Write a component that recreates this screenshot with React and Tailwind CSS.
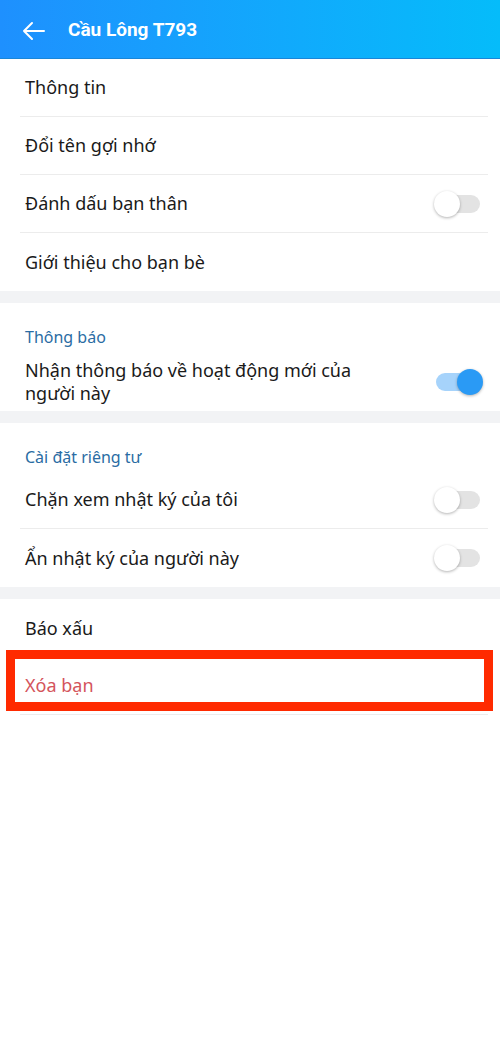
import React from 'react';

const Toggle = ({ on }) => (
  <div className="relative w-[48px] h-[28px] flex items-center shrink-0">
    <div className={`w-[44px] h-[18px] ml-[2px] rounded-full ${on ? 'bg-[#a6d3fb]' : 'bg-[#e3e3e3]'}`} />
    <div
      className={`absolute top-[1px] w-[26px] h-[26px] rounded-full shadow-[0_1px_3px_rgba(0,0,0,0.3)] ${
        on ? 'left-[23px] bg-[#2a9af5]' : 'left-0 bg-white'
      }`}
    />
  </div>
);

const Row = ({ label, toggle, divider = true, red }) => (
  <div className="pl-[20px] pr-[12px]">
    <div className={`h-[58px] flex items-center justify-between pl-[5px] pr-[6px] ${divider ? 'border-b border-[#ececec]' : ''}`}>
      <span className={`text-[18px] ${red ? 'text-[#d4545c]' : 'text-[#1a1a1a]'}`}>{label}</span>
      {toggle !== undefined && <Toggle on={toggle} />}
    </div>
  </div>
);

const Gap = () => <div className="h-[12px] bg-[#f2f3f5]" />;

const SectionTitle = ({ children }) => (
  <div className="pl-[25px] pt-[22px] pb-[4px] text-[16px] text-[#2a6ca3]">{children}</div>
);

export default function App() {
  return (
    <div className="w-[500px] h-[1051px] bg-white" style={{ fontFamily: '"Noto Sans", sans-serif' }}>
      {/* Header */}
      <div className="h-[59px] bg-gradient-to-r from-[#1e90fe] to-[#05bcfa] border-b border-[#1a86d8] flex items-center">
        <svg className="ml-[22px] mt-[3px]" width="23" height="20" viewBox="0 0 23 20" fill="none" stroke="white" strokeWidth="2" strokeLinecap="round" strokeLinejoin="round">
          <path d="M22 10H2M10 2L2 10l8 8" />
        </svg>
        <span className="ml-[23px] mt-[3px] text-white text-[19px] font-bold" style={{ fontFamily: 'Roboto, sans-serif' }}>
          Cầu Lông T793
        </span>
      </div>

      <Row label="Thông tin" />
      <Row label="Đổi tên gợi nhớ" />
      <Row label="Đánh dấu bạn thân" toggle={false} />
      <Row label="Giới thiệu cho bạn bè" divider={false} />
      <Gap />

      <SectionTitle>Thông báo</SectionTitle>
      <div className="pl-[25px] pr-[18px] pt-[6px] pb-[6px] flex items-center justify-between">
        <span className="text-[18px] text-[#1a1a1a] leading-[23px] w-[360px]">
          Nhận thông báo về hoạt động mới của người này
        </span>
        <Toggle on />
      </div>
      <Gap />

      <SectionTitle>Cài đặt riêng tư</SectionTitle>
      <div className="-mt-[2px]">
        <Row label="Chặn xem nhật ký của tôi" toggle={false} />
        <Row label="Ẩn nhật ký của người này" toggle={false} divider={false} />
      </div>
      <Gap />

      <Row label="Báo xấu" divider={false} />
      <div className="relative">
        <Row label="Xóa bạn" red />
        {/* highlight annotation */}
        <div className="absolute left-[6px] right-[7px] top-[-7px] h-[61px] border-[9px] border-[#ff2a00] pointer-events-none" />
      </div>
    </div>
  );
}
